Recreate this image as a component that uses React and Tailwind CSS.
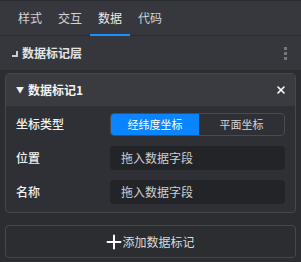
import { X, Plus } from 'lucide-react';

const TABS = ['样式', '交互', '数据', '代码'];

function FieldRow({ label, children }) {
  return (
    <div className="flex items-center h-[34px]">
      <span className="w-[104px] pl-[10px] text-[12px] font-medium text-[#f2f2f2]">{label}</span>
      <div className="flex-1 pr-[10px]">{children}</div>
    </div>
  );
}

export default function App() {
  return (
    <div
      className="w-[301px] h-[262px] bg-[#2b2d31] text-[#d9d9d9] text-[12px] overflow-hidden"
      style={{ fontFamily: '"Noto Sans CJK SC", "Noto Sans", sans-serif' }}
    >
      <div className="flex h-[36px] bg-[#36383e] border-t border-[#2a2c30] border-b pl-[10px]">
        {TABS.map((t, i) => (
          <div
            key={t}
            className={`relative w-[40px] flex items-center justify-center text-[12px] ${i === 2 ? 'text-[#eaeaea]' : 'text-[#d2d4d8]'}`}
          >
            {t}
            {i === 2 && <span className="absolute bottom-[-1px] left-0 right-0 h-[2px] bg-[#1890ff]" />}
          </div>
        ))}
      </div>

      <div className="flex items-center justify-between h-[34px] bg-[#35373d] pl-[12px] pr-[14px]">
        <div className="flex items-center gap-[4px] font-bold text-[#e4e4e4]">
          <span className="w-[6px] h-[6px] mt-[2px] border-r-2 border-b-2 border-[#c9ccd2]" />
          数据标记层
        </div>
        <div className="flex flex-col gap-[2px]">
          <span className="w-[3px] h-[3px] bg-[#74777d]" />
          <span className="w-[3px] h-[3px] bg-[#74777d]" />
          <span className="w-[3px] h-[3px] bg-[#74777d]" />
        </div>
      </div>

      <div className="px-[5px] pt-[3px]">
        <div className="border border-[#46484e] rounded-[4px] overflow-hidden bg-[#2e3035]">
          <div className="flex items-center justify-between h-[32px] bg-[#393b41] pl-[10px] pr-[8px]">
            <div className="flex items-center gap-[4px] font-bold text-[#f2f2f2]">
              <span className="text-[8px]">▼</span>
              数据标记1
            </div>
            <X size={12} strokeWidth={3.2} className="text-white" />
          </div>
          <div className="pt-[1px] pb-[3px]">
            <FieldRow label="坐标类型">
              <div className="flex h-[23px] border border-[#4a4c52] rounded-[4px] overflow-hidden text-[11px]">
                <div className="w-[88px] bg-[#0a84ff] text-white flex items-center justify-center">经纬度坐标</div>
                <div className="flex-1 flex items-center justify-center text-[#d4d4d4]">平面坐标</div>
              </div>
            </FieldRow>
            <FieldRow label="位置">
              <div className="h-[24px] bg-[#232427] rounded-[4px] flex items-center pl-[11px] text-[12px] text-[#cfcfcf]">拖入数据字段</div>
            </FieldRow>
            <FieldRow label="名称">
              <div className="h-[24px] bg-[#232427] rounded-[4px] flex items-center pl-[11px] text-[12px] text-[#cfcfcf]">拖入数据字段</div>
            </FieldRow>
          </div>
        </div>

        <button className="mt-[12px] w-full h-[33px] border border-[#46484e] rounded-[4px] flex items-center justify-center text-[12px] text-[#dcdcdc]">
          <Plus size={22} strokeWidth={2.2} className="text-white -mx-[3px]" />
          添加数据标记
        </button>
      </div>
    </div>
  );
}
